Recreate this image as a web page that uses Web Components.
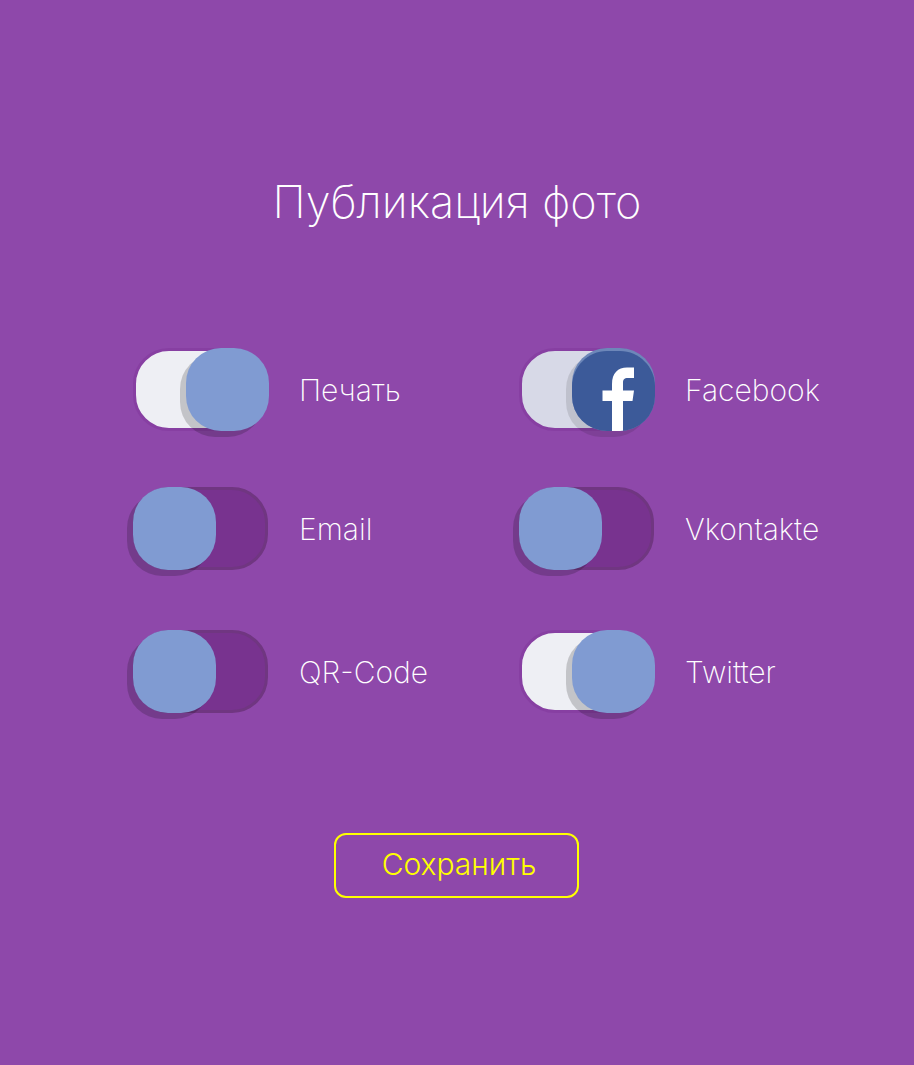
<!DOCTYPE html>
<html lang="ru">
<head>
<meta charset="utf-8">
<meta name="viewport" content="width=device-width, initial-scale=1">
<title>Публикация фото</title>
<style>
body { margin: 0; background: #8e48aa; }
</style>
</head>
<body>
<publish-page>
  <span slot="title">Публикация фото</span>
  <toggle-switch checked>Печать</toggle-switch>
  <toggle-switch checked brand="facebook">Facebook</toggle-switch>
  <toggle-switch>Email</toggle-switch>
  <toggle-switch>Vkontakte</toggle-switch>
  <toggle-switch>QR-Code</toggle-switch>
  <toggle-switch checked>Twitter</toggle-switch>
  <save-button slot="action">Сохранить</save-button>
</publish-page>

<template id="page-template">
  <style>
    :host {
      display: block;
      box-sizing: border-box;
      min-height: 100vh;
      padding: 174px 32px 64px;
      background: #8e48aa;
      color: #fff;
      font-family: Inter, "Open Sans", sans-serif;
      font-weight: 200;
    }
    h1 {
      margin: 0 0 118px;
      font-size: 45px;
      line-height: 56px;
      font-weight: 200;
      text-align: center;
    }
    .options {
      display: grid;
      grid-template-columns: 386px 310px;
      grid-template-rows: 83px 87px 83px;
      row-gap: 56px;
      justify-content: center;
      align-items: start;
      padding-left: 48px;
    }
    .action {
      display: flex;
      justify-content: center;
      margin-top: 120px;
      padding-right: 2px;
    }
    @media (max-width: 780px) {
      .options {
        grid-template-columns: auto;
        grid-template-rows: none;
        padding-left: 0;
      }
    }
  </style>
  <h1><slot name="title"></slot></h1>
  <div class="options"><slot></slot></div>
  <div class="action"><slot name="action"></slot></div>
</template>

<template id="switch-template">
  <style>
    :host { display: block; }
    label {
      display: flex;
      align-items: center;
      gap: 30px;
      font-size: 30px;
      line-height: 40px;
      cursor: pointer;
    }
    .control {
      position: relative;
      flex: none;
      width: 136px;
      height: 83px;
    }
    input {
      appearance: none;
      display: block;
      box-sizing: border-box;
      width: 135px;
      height: 83px;
      margin: 0;
      border: 3px solid #703681;
      border-radius: 36px;
      background: #78338f;
      cursor: pointer;
    }
    input:checked {
      border-color: #873fa2;
      background: #eeeff4;
    }
    .knob {
      position: absolute;
      top: 0;
      left: 0;
      width: 83px;
      height: 83px;
      border-radius: 35px;
      overflow: hidden;
      background: #809bd2;
      box-shadow: -6px 6px 0 rgba(0, 0, 0, 0.18);
      pointer-events: none;
    }
    input:checked + .knob { left: auto; right: 0; }
    svg { display: none; }
    :host([brand="facebook"]) svg { display: block; }
    :host([brand="facebook"]) input:checked { background: #d7d9e7; }
    :host([brand="facebook"]) .knob {
      background: #6d87b9;
      box-shadow: -6px 6px 0 rgba(0, 0, 0, 0.11);
    }
  </style>
  <label>
    <span class="control">
      <input type="checkbox">
      <span class="knob">
        <svg width="83" height="83" viewBox="0 0 83 83" aria-hidden="true">
          <path fill="#3c5a99" d="M0 38C0 19 16 3 35 3H48C67 3 83 19 83 38V83H0Z"/>
          <path fill="#fff" d="M40 83V53H30.500V42.500H40V36C40 25 46 19.500 55 19.500H62V30H56C52 30 51 31.500 51 35V42.500H62L60.500 53H51V83Z"/>
        </svg>
      </span>
    </span>
    <span><slot></slot></span>
  </label>
</template>

<template id="button-template">
  <style>
    :host { display: block; }
    button {
      display: block;
      box-sizing: border-box;
      min-width: 245px;
      height: 65px;
      margin: 0;
      padding: 0 40px 3px 46px;
      border: 2px solid #ff0;
      border-radius: 12px;
      background: none;
      color: #ff0;
      font-family: inherit;
      font-size: 30px;
      line-height: 40px;
      font-weight: 300;
      cursor: pointer;
    }
  </style>
  <button type="button"><slot></slot></button>
</template>

<script>
class TemplateElement extends HTMLElement {
  constructor() {
    super();
    const template = document.getElementById(this.constructor.template);
    this.attachShadow({ mode: "open" }).append(template.content.cloneNode(true));
  }
}

class PublishPage extends TemplateElement {
  static template = "page-template";
}

class ToggleSwitch extends TemplateElement {
  static template = "switch-template";
  connectedCallback() {
    this.shadowRoot.querySelector("input").checked = this.hasAttribute("checked");
  }
}

class SaveButton extends TemplateElement {
  static template = "button-template";
}

customElements.define("publish-page", PublishPage);
customElements.define("toggle-switch", ToggleSwitch);
customElements.define("save-button", SaveButton);
</script>
</body>
</html>
